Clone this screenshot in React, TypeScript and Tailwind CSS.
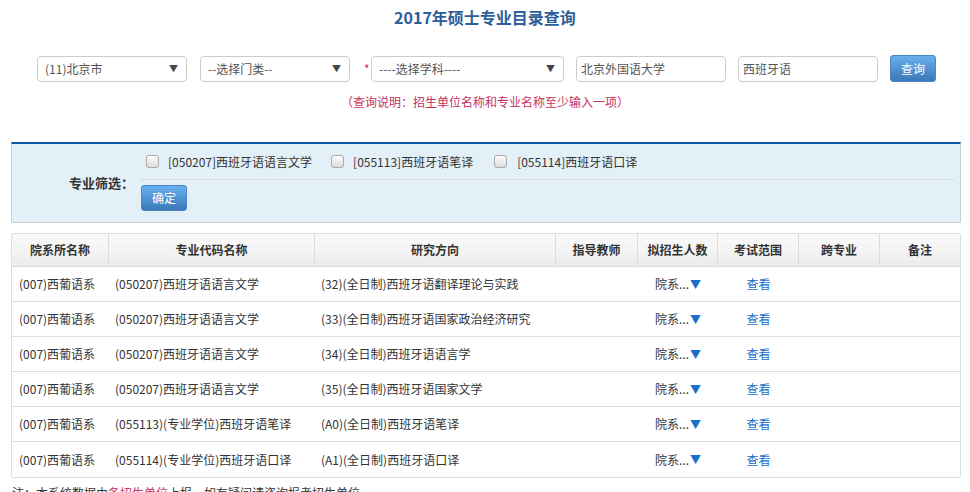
import React from "react";

const rows = [
  ["(007)西葡语系", "(050207)西班牙语语言文学", "(32)(全日制)西班牙语翻译理论与实践"],
  ["(007)西葡语系", "(050207)西班牙语语言文学", "(33)(全日制)西班牙语国家政治经济研究"],
  ["(007)西葡语系", "(050207)西班牙语语言文学", "(34)(全日制)西班牙语语言学"],
  ["(007)西葡语系", "(050207)西班牙语语言文学", "(35)(全日制)西班牙语国家文学"],
  ["(007)西葡语系", "(055113)(专业学位)西班牙语笔译", "(A0)(全日制)西班牙语笔译"],
  ["(007)西葡语系", "(055114)(专业学位)西班牙语口译", "(A1)(全日制)西班牙语口译"],
];

const headers = ["院系所名称", "专业代码名称", "研究方向", "指导教师", "拟招生人数", "考试范围", "跨专业", "备注"];

function Select({ text, w }: { text: string; w: string }) {
  return (
    <div className={`${w} h-[26px] border border-[#ccc] rounded-[4px] bg-white flex items-center justify-between pl-[7px] pr-[8px] text-[12px] text-[#555]`}>
      <span>{text}</span>
      <span className="text-[9px] text-[#444]">▼</span>
    </div>
  );
}

function Input({ text, w }: { text: string; w: string }) {
  return (
    <div className={`${w} h-[26px] border border-[#ccc] rounded-[4px] bg-white flex items-center pl-[4px] text-[12px] text-[#555]`}>
      {text}
    </div>
  );
}

function Checkbox() {
  return (
    <span className="inline-block w-[13px] h-[13px] rounded-[3px] border border-[#a9a9a9] bg-gradient-to-b from-[#fdfdfd] to-[#dcdcdc]" />
  );
}

export default function App() {
  return (
    <div
      className="w-[970px] h-[492px] overflow-hidden bg-white text-[#333]"
      style={{ fontFamily: '"Noto Sans CJK SC", "Noto Sans", sans-serif' }}
    >
      <div className="h-[34px] flex items-center justify-center text-[16px] font-bold text-[#2c5e9a]">
        2017年硕士专业目录查询
      </div>

      <div className="mt-[21px] h-[27px] flex items-center pl-[37px]">
        <Select text="(11)北京市" w="w-[150px]" />
        <div className="ml-[13px]">
          <Select text="--选择门类--" w="w-[150px]" />
        </div>
        <span className="ml-[14px] w-[7px] text-[12px] text-[#d0305a]">*</span>
        <div>
          <Select text="----选择学科----" w="w-[193px]" />
        </div>
        <div className="ml-[12px]">
          <Input text="北京外国语大学" w="w-[150px]" />
        </div>
        <div className="ml-[12px]">
          <Input text="西班牙语" w="w-[140px]" />
        </div>
        <button className="ml-[12px] w-[46px] h-[27px] rounded-[3px] bg-gradient-to-b from-[#69b0ee] to-[#3a78b9] text-white text-[12px] border border-[#4a87c4]">
          查询
        </button>
      </div>

      <div className="mt-[9px] h-[22px] flex items-center justify-center text-[12px] text-[#c9305c]">
        （查询说明：招生单位名称和专业名称至少输入一项）
      </div>

      <div className="mt-[29px] ml-[11px] w-[950px] h-[81px] border border-[#ccc] border-t-[2px] border-t-[#0b56a0] bg-[#e4f0f8] flex">
        <div className="w-[129px] flex items-center justify-end pr-[7px] text-[13px] font-bold text-[#333]">
          专业筛选：
        </div>
        <div className="flex-1 pr-[7px]">
          <div className="h-[36px] border-b border-dotted border-[#c4c8cc] flex items-center pl-[5px] text-[12px] text-[#333]">
            <Checkbox />
            <span className="ml-[9px]">[050207]西班牙语语言文学</span>
            <span className="ml-[19px] flex items-center">
              <Checkbox />
            </span>
            <span className="ml-[9px]">[055113]西班牙语笔译</span>
            <span className="ml-[21px] flex items-center">
              <Checkbox />
            </span>
            <span className="ml-[10px]">[055114]西班牙语口译</span>
          </div>
          <button className="mt-[5px] w-[46px] h-[26px] rounded-[3px] bg-gradient-to-b from-[#69b0ee] to-[#3a78b9] text-white text-[12px] border border-[#4a87c4]">
            确定
          </button>
        </div>
      </div>

      <div className="mt-[10px] ml-[11px] w-[950px] border border-[#ddd] rounded-[2px]">
        <div className="grid grid-cols-[97px_206px_241px_82px_80px_81px_81px_80px] h-[33px] bg-gradient-to-b from-[#fbfbfb] to-[#ececec] border-b border-[#ddd]">
          {headers.map((h, i) => (
            <div
              key={h}
              className={`flex items-center justify-center text-[12px] font-bold text-[#333] ${i < 7 ? "border-r border-[#dcdcdc]" : ""}`}
            >
              {h}
            </div>
          ))}
        </div>
        {rows.map((r, idx) => (
          <div
            key={idx}
            className={`grid grid-cols-[97px_206px_241px_82px_80px_81px_81px_80px] h-[35px] text-[12px] text-[#333] ${idx < rows.length - 1 ? "border-b border-[#ddd]" : ""}`}
          >
            <div className="flex items-center pl-[7px]">{r[0]}</div>
            <div className="flex items-center pl-[6px]">{r[1]}</div>
            <div className="flex items-center pl-[6px]">{r[2]}</div>
            <div />
            <div className="flex items-center justify-center">
              <span>院系...</span>
              <span className="text-[#1a6fc9] text-[11px] ml-[1px]">▼</span>
            </div>
            <div className="flex items-center justify-center text-[#1a6fc9]">查看</div>
            <div />
            <div />
          </div>
        ))}
      </div>

      <div className="mt-[6px] pl-[12px] text-[12px] text-[#333]">
        注：本系统数据由<span className="text-[#c9305c]">各招生单位</span>上报，如有疑问请咨询报考招生单位。
      </div>
    </div>
  );
}
